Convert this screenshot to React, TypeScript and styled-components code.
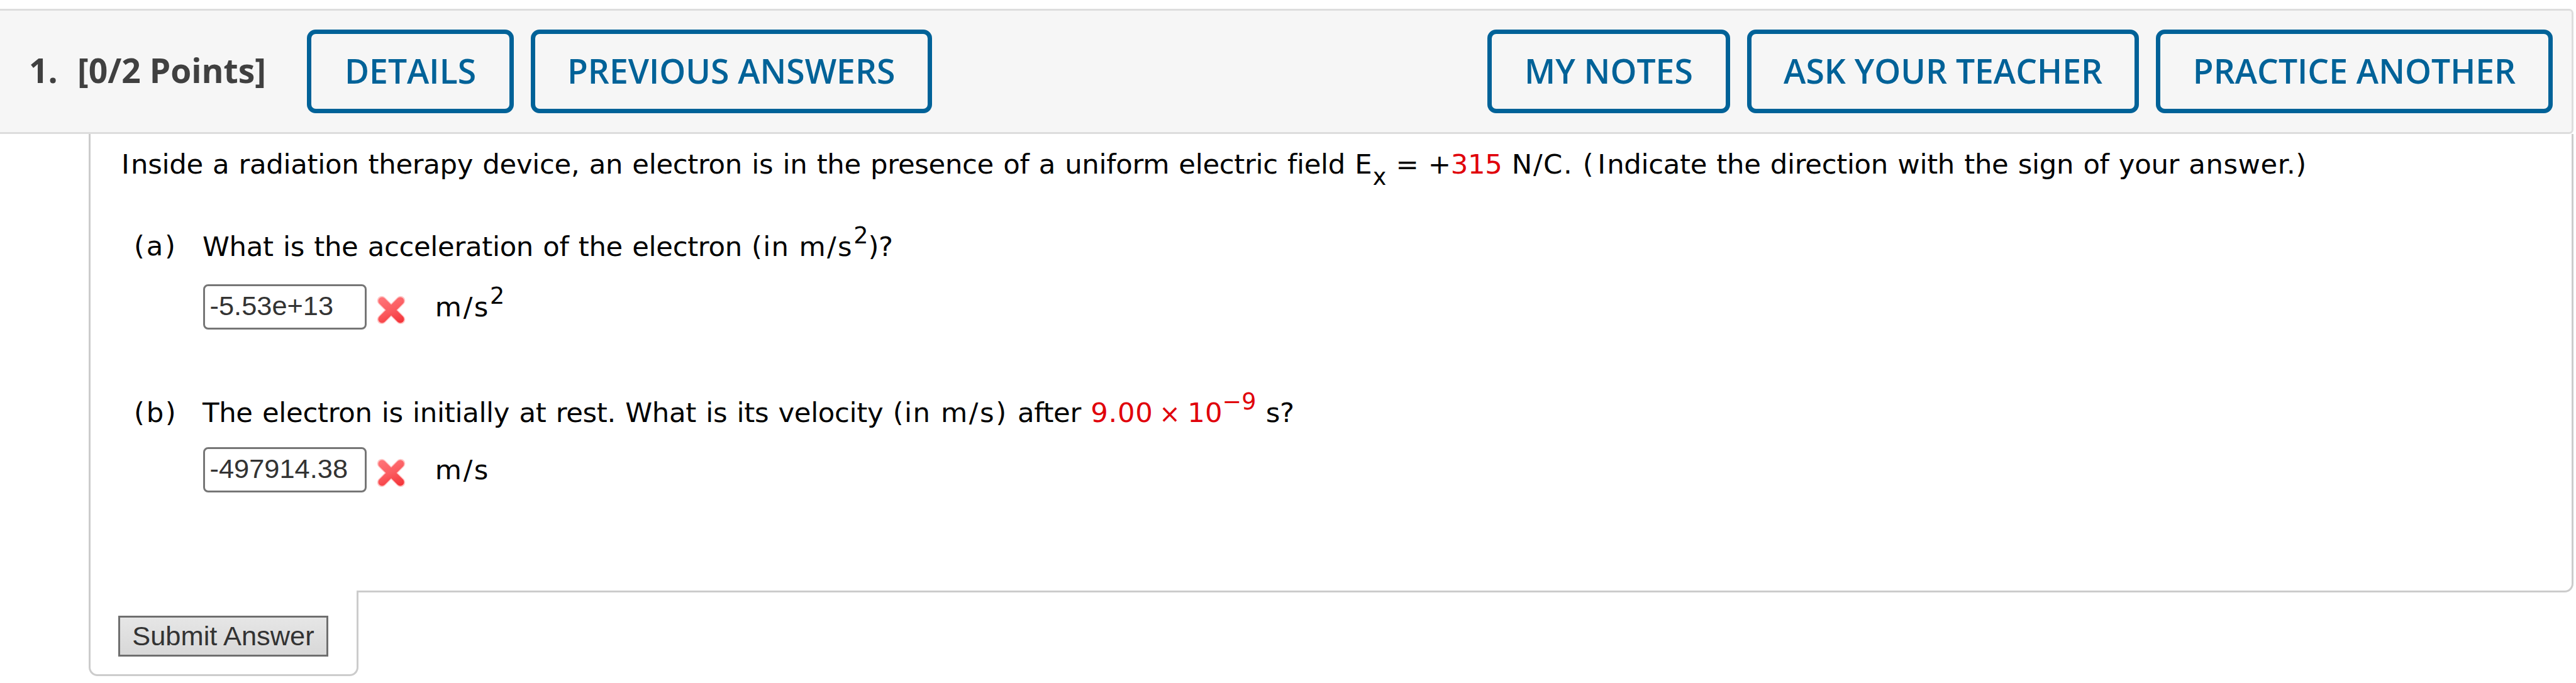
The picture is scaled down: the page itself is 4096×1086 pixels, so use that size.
import React from "react";
import styled, { createGlobalStyle } from "styled-components";

const Global = createGlobalStyle`
  *, *::before, *::after { box-sizing: border-box; }
  body { margin: 0; background: #fff; }
`;

const Page = styled.main`
  width: 4096px;
  height: 1086px;
  padding-top: 14px;
  overflow: hidden;
  background: #fff;
  font-family: Verdana, "DejaVu Sans", sans-serif;
  font-size: 43.4px;
  color: #000;
`;

const Header = styled.header`
  display: flex;
  align-items: flex-start;
  width: 4092px;
  height: 199px;
  padding: 30px 30px 0 46px;
  background: #f6f6f6;
  border: 3px solid #ddd;
  border-left: 0;
  border-radius: 0 7px 7px 0;
  font-family: "Open Sans", sans-serif;
  font-size: 53.4px;
`;

const Heading = styled.h2<{ $w: number }>`
  margin: 0;
  width: ${(p) => p.$w}px;
  line-height: 130px;
  font-size: inherit;
  font-weight: 700;
  color: #404040;
  white-space: nowrap;
`;

const Actions = styled.div<{ $end?: boolean }>`
  display: flex;
  gap: 26.7px;
  margin-left: ${(p) => (p.$end ? "auto" : "0")};
`;

const ActionButton = styled.button<{ $w: number }>`
  width: ${(p) => p.$w}px;
  height: 133px;
  padding: 0 0 2px;
  border: 7px solid #006298;
  border-radius: 14px;
  background: transparent;
  color: #006298;
  font: inherit;
  font-weight: 600;
  white-space: nowrap;
`;

const Panel = styled.section`
  width: 3951px;
  height: 729px;
  margin-left: 141px;
  padding: 18px 0 0 49px;
  border: 3px solid #ccc;
  border-top: 0;
  border-radius: 0 0 14px 0;
`;

const Prompt = styled.p`
  margin: 0;
  line-height: 60px;
  white-space: nowrap;
  letter-spacing: -0.33px;
  word-spacing: 1.8px;
`;

const Spaced = styled.span<{ $by: number }>`
  letter-spacing: ${(p) => p.$by}px;
`;

const Part = styled.div<{ $top: number }>`
  display: grid;
  grid-template-columns: 109px 1fr;
  margin: ${(p) => p.$top}px 0 0 20px;
`;

const Label = styled.span<{ $up: number }>`
  margin-top: ${(p) => -p.$up}px;
  line-height: 60px;
  letter-spacing: 2.7px;
`;

const Answer = styled.div<{ $top: number }>`
  display: flex;
  align-items: flex-start;
  margin-top: ${(p) => p.$top}px;
`;

const AnswerBox = styled.input`
  width: 260px;
  height: 71.4px;
  margin-left: 1px;
  padding: 0 0 3px 7.5px;
  border: 3px solid #767676;
  border-radius: 8px;
  background: #fff;
  color: #333;
  font: 43.4px "Liberation Sans", Arial, sans-serif;
`;

const WrongIcon = styled.svg`
  width: 48px;
  height: 48px;
  margin: 16.4px 0 0 14.6px;
`;

const Unit = styled.span`
  margin: 5.6px 0 0 46.2px;
  line-height: 60px;
`;

const Value = styled.span`
  color: #e00009;
`;

const Times = styled.span`
  margin: 0 12px 0 9.5px;
  font-size: 40px;
  line-height: 0;
  vertical-align: -1px;
`;

const Sup = styled.sup`
  font-size: 36.5px;
  line-height: 0;
  letter-spacing: 0;
  vertical-align: 20px;
`;

const Sub = styled.sub`
  margin-left: 1.5px;
  font-size: 36.5px;
  line-height: 0;
  vertical-align: -18.4px;
`;

const SubmitTab = styled.div`
  position: relative;
  width: 429px;
  height: 136px;
  margin: -3px 0 0 141px;
  padding: 40px 0 0 44px;
  background: #fff;
  border: 3px solid #ccc;
  border-top: 0;
  border-radius: 0 0 14px 14px;
`;

const SubmitButton = styled.button`
  display: block;
  width: 334px;
  height: 64.5px;
  padding: 0;
  border: 3px solid #6f6f6f;
  border-radius: 0;
  background: linear-gradient(#e6e6e6, #d8d8d8);
  color: #333;
  font: 43.4px "Liberation Sans", Arial, sans-serif;
  white-space: nowrap;
`;

function Wrong({ id }: { id: string }) {
  return (
    <WrongIcon viewBox="0 0 48 48" aria-label="Incorrect">
      <defs>
        <linearGradient id={id} gradientUnits="userSpaceOnUse" x1="14" y1="3" x2="32" y2="46">
          <stop offset="0" stopColor="#ff7377" />
          <stop offset="0.5" stopColor="#fb5c60" />
          <stop offset="1" stopColor="#f4353a" />
        </linearGradient>
      </defs>
      <path d="M9 9 L39 39 M39 9 L9 39" stroke="#ffc4c4" strokeWidth="14.5" strokeLinecap="round" />
      <path d="M9.5 9.5 L38.5 38.5 M38.5 9.5 L9.5 38.5" stroke={`url(#${id})`} strokeWidth="12" strokeLinecap="round" />
    </WrongIcon>
  );
}

export default function App() {
  return (
    <Page>
      <Global />
      <Header>
        <Heading $w={77}>1.</Heading>
        <Heading $w={365}>[0/2 Points]</Heading>
        <Actions>
          <ActionButton $w={329}>DETAILS</ActionButton>
          <ActionButton $w={638}>PREVIOUS ANSWERS</ActionButton>
        </Actions>
        <Actions $end>
          <ActionButton $w={386.5}>MY NOTES</ActionButton>
          <ActionButton $w={623.5}>ASK YOUR TEACHER</ActionButton>
          <ActionButton $w={631}>PRACTICE ANOTHER</ActionButton>
        </Actions>
      </Header>
      <Panel>
        <Prompt>
          <Spaced $by={2.2}>I</Spaced>nside a radiation therapy device, an electron is in the presence of a uniform
          electric field E<Sub>x</Sub> = +<Value>315</Value> <Spaced $by={1.6}>N/C.</Spaced>{" "}
          <Spaced $by={6.5}>(</Spaced>
          <Spaced $by={2.2}>I</Spaced>ndicate the direction with the sign of your <Spaced $by={0.5}>answer.)</Spaced>
        </Prompt>
        <Part $top={71}>
          <Label $up={1.5}>(a)</Label>
          <div>
            <Prompt>
              What is the acceleration of the electron <Spaced $by={1.2}>(in</Spaced> <Spaced $by={2.4}>m/s</Spaced>
              <Sup>2</Sup>)?
            </Prompt>
            <Answer $top={30.2}>
              <AnswerBox defaultValue="-5.53e+13" />
              <Wrong id="wrong-a" />
              <Unit>
                <Spaced $by={2.6}>m/s</Spaced>
                <Sup>2</Sup>
              </Unit>
            </Answer>
          </div>
        </Part>
        <Part $top={102.9}>
          <Label $up={0}>(b)</Label>
          <div>
            <Prompt>
              The electron is initially at rest. What is its velocity <Spaced $by={1.5}>(in</Spaced>{" "}
              <Spaced $by={2.6}>m/s)</Spaced> after{" "}
              <Value>
                <Spaced $by={0.7}>9.00</Spaced>
                <Times>×</Times>
                <Spaced $by={0}>10</Spaced>
                <Sup>−9</Sup>
              </Value>{" "}
              s?
            </Prompt>
            <Answer $top={24.9}>
              <AnswerBox defaultValue="-497914.38" />
              <Wrong id="wrong-b" />
              <Unit>
                <Spaced $by={2.6}>m/s</Spaced>
              </Unit>
            </Answer>
          </div>
        </Part>
      </Panel>
      <SubmitTab>
        <SubmitButton>Submit Answer</SubmitButton>
      </SubmitTab>
    </Page>
  );
}
